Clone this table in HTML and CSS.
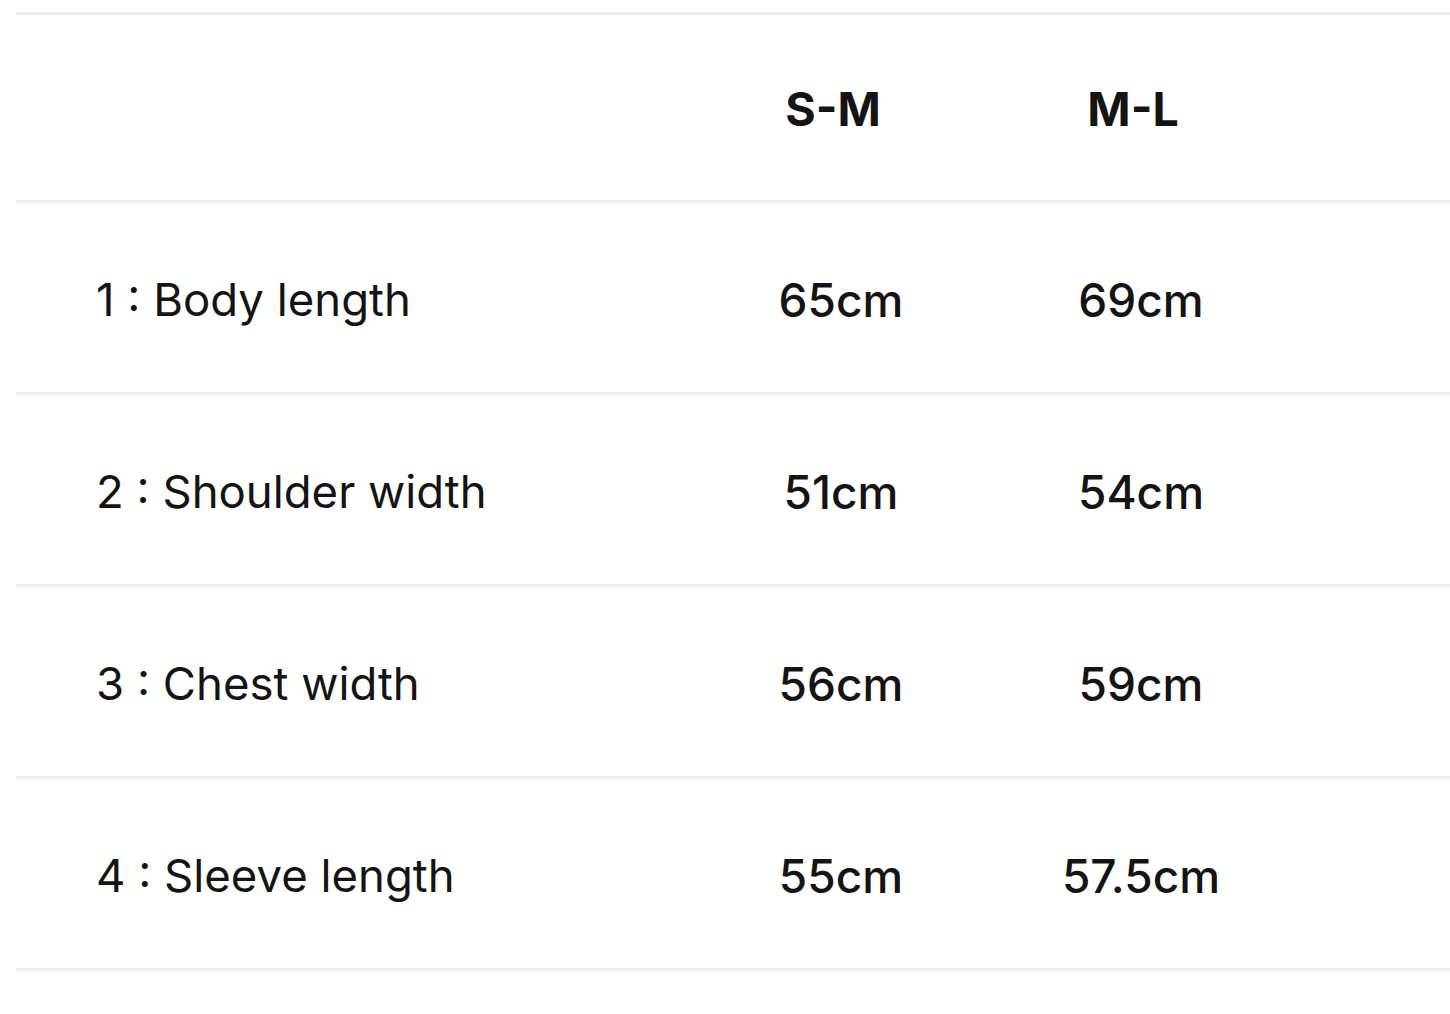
FILE: index.html
```html
<!DOCTYPE html>
<html>
<head>
<meta charset="utf-8">
<link rel="stylesheet" href="styles.css">
</head>
<body>
<div class="size-table">
  <div class="row head">
    <div class="label"></div>
    <div class="val">S-M</div>
    <div class="val">M-L</div>
  </div>
  <div class="row">
    <div class="label">1 : Body length</div>
    <div class="val">65cm</div>
    <div class="val">69cm</div>
  </div>
  <div class="row">
    <div class="label">2 : Shoulder width</div>
    <div class="val">51cm</div>
    <div class="val">54cm</div>
  </div>
  <div class="row">
    <div class="label">3 : Chest width</div>
    <div class="val">56cm</div>
    <div class="val">59cm</div>
  </div>
  <div class="row">
    <div class="label">4 : Sleeve length</div>
    <div class="val">55cm</div>
    <div class="val">57.5cm</div>
  </div>
</div>
</body>
</html>
```

FILE: styles.css
```css
html, body {
  margin: 0;
  padding: 0;
  background: #ffffff;
}
body {
  font-family: Inter, "Noto Sans", sans-serif;
  color: #141414;
  padding: 12px 0 0 16px;
}
.size-table {
  border-top: 3px solid #ededed;
}
.row {
  display: grid;
  grid-template-columns: 675px 300px 300px 1fr;
  align-items: center;
  box-sizing: border-box;
  height: 192px;
  padding-top: 4px;
  border-bottom: 3px solid #ededed;
  font-size: 45.5px;
}
.row.head {
  height: 188px;
  padding-top: 2px;
  font-weight: 700;
  font-size: 46.5px;
}
.label {
  padding-left: 80px;
  white-space: nowrap;
}
.val {
  text-align: center;
  font-size: 46px;
  font-weight: 500;
}
.head .val {
  font-size: 46.5px;
  font-weight: 700;
  padding-right: 16px;
}
```
